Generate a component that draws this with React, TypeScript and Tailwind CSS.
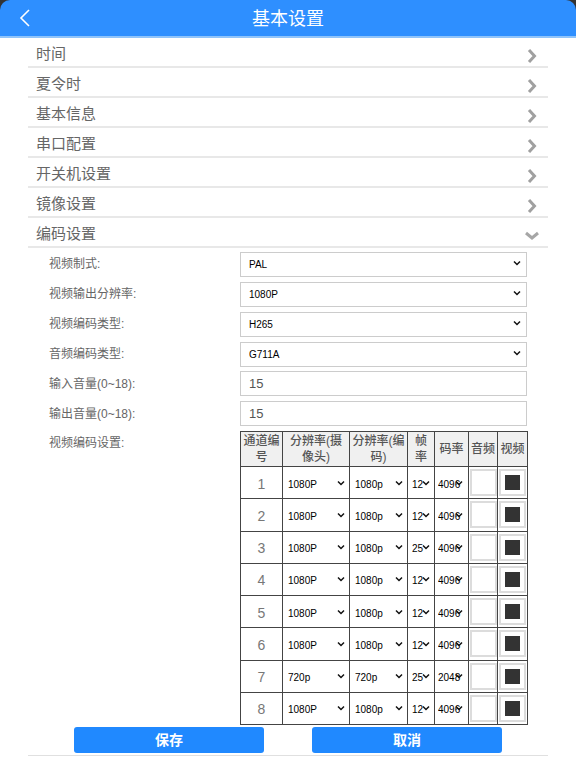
import React from "react";

const FONT = "font-['Liberation_Sans','Noto_Sans_CJK_SC',sans-serif]";

const menus = ["时间", "夏令时", "基本信息", "串口配置", "开关机设置", "镜像设置"];

const channels = [
  { id: 1, cam: "1080P", enc: "1080p", fps: "12", rate: "4096" },
  { id: 2, cam: "1080P", enc: "1080p", fps: "12", rate: "4096" },
  { id: 3, cam: "1080P", enc: "1080p", fps: "25", rate: "4096" },
  { id: 4, cam: "1080P", enc: "1080p", fps: "12", rate: "4096" },
  { id: 5, cam: "1080P", enc: "1080p", fps: "12", rate: "4096" },
  { id: 6, cam: "1080P", enc: "1080p", fps: "12", rate: "4096" },
  { id: 7, cam: "720p", enc: "720p", fps: "25", rate: "2048" },
  { id: 8, cam: "1080P", enc: "1080p", fps: "12", rate: "4096" },
];

function MenuRow({ title, open }: { title: string; open?: boolean }) {
  return (
    <div className="flex h-[30px] items-center justify-between border-b-2 border-[#e8e8e8] pl-[8px] pr-[8px] pt-[5px]">
      <span className="text-[15px] text-[#666]">{title}</span>
      {open ? (
        <svg width="16" height="10" viewBox="0 0 16 10" className="mt-[2px]">
          <path d="M2 2l6 5 6-5" fill="none" stroke="#a6a6a6" strokeWidth="3" />
        </svg>
      ) : (
        <svg width="10" height="16" viewBox="0 0 10 16" className="mr-[3px] mt-[2px]">
          <path d="M2 2l5.5 6L2 14" fill="none" stroke="#a0a0a0" strokeWidth="3" />
        </svg>
      )}
    </div>
  );
}

function FormRow({ label, children }: { label: string; children: React.ReactNode }) {
  return (
    <div className="flex h-[30px] items-center">
      <span className="w-[191px] shrink-0 pt-[1px] text-[12px] text-[#666]">{label}</span>
      {children}
    </div>
  );
}

function Arrow({ className }: { className: string }) {
  return (
    <svg width="8" height="6" viewBox="0 0 8 6" className={`pointer-events-none absolute top-1/2 -translate-y-1/2 ${className}`}>
      <path d="M1 1.5l3 3 3-3" fill="none" stroke="#111" strokeWidth="1.5" />
    </svg>
  );
}

function FormSelect({ value }: { value: string }) {
  return (
    <div className="relative h-[25px] w-[287px]">
      <select
        defaultValue={value}
        className="h-full w-full appearance-none rounded-none border border-[#ccc] bg-white pl-[8px] text-[10px] text-black outline-none"
      >
        <option>{value}</option>
      </select>
      <Arrow className="right-[6px]" />
    </div>
  );
}

function FormInput({ value }: { value: string }) {
  return (
    <input
      defaultValue={value}
      className="h-[25px] w-[287px] border border-[#ccc] bg-white px-[8px] text-[13px] text-[#555] outline-none"
    />
  );
}

function CellSelect({ value, arrow }: { value: string; arrow: string }) {
  return (
    <div className="relative h-[24px] w-full">
      <select
        defaultValue={value}
        className="h-full w-full appearance-none rounded-none border-0 bg-white p-0 text-[10px] text-black outline-none"
      >
        <option>{value}</option>
      </select>
      <Arrow className={arrow} />
    </div>
  );
}

function CheckBox({ checked }: { checked?: boolean }) {
  return (
    <div className="mx-auto flex h-[27px] w-[27px] items-center justify-center border-2 border-[#dcdcdc] bg-white">
      {checked && <div className="h-[15px] w-[15px] bg-[#333]" />}
    </div>
  );
}

export default function App() {
  const th = "border border-[#444] bg-[#f0f0f0] p-0 text-center text-[12px] font-medium leading-[16px] text-[#555]";
  const thPad = "border border-[#444] bg-[#f0f0f0] px-[3px] py-0 text-center text-[12px] font-medium leading-[16px] text-[#555]";
  const td = "border border-[#444] p-0 text-center align-middle";

  return (
    <div className={`${FONT} min-h-[759px] bg-white`}>
      <div className="bg-[#333]">
        <div className="flex h-[38px] items-center rounded-t-[10px] border-b-2 border-[#90c4fa] bg-[#2e8fff]">
          <svg width="14" height="20" viewBox="0 0 14 20" className="ml-[18px]">
            <path d="M11 2L3 10l8 8" fill="none" stroke="#fff" strokeWidth="1.6" />
          </svg>
          <span className="ml-[220px] pt-[3px] text-[18px] text-white">基本设置</span>
        </div>
      </div>

      <div className="mx-[28px] w-[520px]">
        {menus.map((m) => (
          <MenuRow key={m} title={m} />
        ))}
        <MenuRow title="编码设置" open />

        <div className="pl-[21px]">
          <FormRow label="视频制式:">
            <FormSelect value="PAL" />
          </FormRow>
          <FormRow label="视频输出分辨率:">
            <FormSelect value="1080P" />
          </FormRow>
          <FormRow label="视频编码类型:">
            <FormSelect value="H265" />
          </FormRow>
          <FormRow label="音频编码类型:">
            <FormSelect value="G711A" />
          </FormRow>
          <FormRow label="输入音量(0~18):">
            <FormInput value="15" />
          </FormRow>
          <FormRow label="输出音量(0~18):">
            <FormInput value="15" />
          </FormRow>

          <div className="mt-[3px] flex">
            <span className="mt-[3px] w-[191px] shrink-0 text-[12px] leading-[18px] text-[#666]">视频编码设置:</span>
            <table className="h-[293px] w-[287px] table-fixed border-collapse">
              <colgroup>
                <col className="w-[42px]" />
                <col className="w-[67px]" />
                <col className="w-[58px]" />
                <col className="w-[27px]" />
                <col className="w-[34px]" />
                <col className="w-[29px]" />
                <col className="w-[30px]" />
              </colgroup>
              <thead>
                <tr className="h-[35px]">
                  <th className={th}>通道编号</th>
                  <th className={thPad}>分辨率(摄像头)</th>
                  <th className={th}>分辨率(编码)</th>
                  <th className={thPad}>帧率</th>
                  <th className={th}>码率</th>
                  <th className={th}>音频</th>
                  <th className={th}>视频</th>
                </tr>
              </thead>
              <tbody>
                {channels.map((c) => (
                  <tr key={c.id} className="h-[32.25px]">
                    <td className={`${td} pt-[3px] text-[14px] text-[#777]`}>{c.id}</td>
                    <td className={`${td} pl-[5px]`}>
                      <CellSelect value={c.cam} arrow="right-[4px]" />
                    </td>
                    <td className={`${td} pl-[5px]`}>
                      <CellSelect value={c.enc} arrow="right-[4px]" />
                    </td>
                    <td className={`${td} pl-[4px]`}>
                      <CellSelect value={c.fps} arrow="right-[4px]" />
                    </td>
                    <td className={`${td} pl-[3px]`}>
                      <CellSelect value={c.rate} arrow="right-[5px]" />
                    </td>
                    <td className={td}>
                      <CheckBox />
                    </td>
                    <td className={td}>
                      <CheckBox checked />
                    </td>
                  </tr>
                ))}
              </tbody>
            </table>
          </div>
        </div>

        <div className="mt-[2px] flex gap-[48px] border-b border-[#e0e0e0] pb-[2px] pl-[46px]">
          <button className="h-[26px] w-[190px] rounded-[3px] bg-[#2089ff] text-[14px] font-bold text-white">保存</button>
          <button className="h-[26px] w-[190px] rounded-[3px] bg-[#2089ff] text-[14px] font-bold text-white">取消</button>
        </div>
      </div>
    </div>
  );
}
